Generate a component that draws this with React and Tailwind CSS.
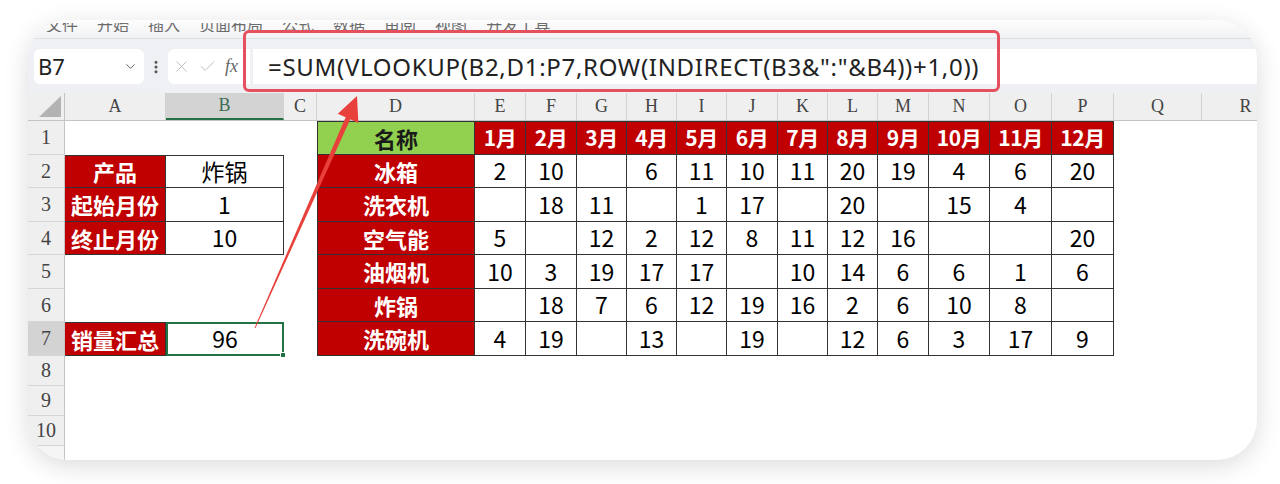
import React from 'react'
import { ChevronDown, EllipsisVertical, X, Check } from 'lucide-react'

const COLS = [
  ['A', 'w-[101px]'],
  ['B', 'w-[118px]'],
  ['C', 'w-[33px]'],
  ['D', 'w-[158px]'],
  ['E', 'w-[51px]'],
  ['F', 'w-[51px]'],
  ['G', 'w-[50px]'],
  ['H', 'w-[50px]'],
  ['I', 'w-[50px]'],
  ['J', 'w-[51px]'],
  ['K', 'w-[50px]'],
  ['L', 'w-[50px]'],
  ['M', 'w-[51px]'],
  ['N', 'w-[61px]'],
  ['O', 'w-[62px]'],
  ['P', 'w-[62px]'],
  ['Q', 'w-[88px]'],
  ['R', 'w-[88px]'],
]

const MONTH_COLS = COLS.slice(4, 16)

const products = [
  ['冰箱', [2, 10, null, 6, 11, 10, 11, 20, 19, 4, 6, 20]],
  ['洗衣机', [null, 18, 11, null, 1, 17, null, 20, null, 15, 4, null]],
  ['空气能', [5, null, 12, 2, 12, 8, 11, 12, 16, null, null, 20]],
  ['油烟机', [10, 3, 19, 17, 17, null, 10, 14, 6, 6, 1, 6]],
  ['炸锅', [null, 18, 7, 6, 12, 19, 16, 2, 6, 10, 8, null]],
  ['洗碗机', [4, 19, null, 13, null, 19, null, 12, 6, 3, 17, 9]],
]

const leftTable = { 2: ['产品', '炸锅'], 3: ['起始月份', '1'], 4: ['终止月份', '10'] }

const menu = ['文件', '开始', '插入', '页面布局', '公式', '数据', '审阅', '视图', '开发工具']

const cellFont = "font-['Noto_Sans_CJK_SC',sans-serif]"
const serif = "font-['Liberation_Serif',serif]"
const line = 'border-[#333]'

function RowHead({ n, active, h }) {
  return (
    <div
      className={`w-[37px] ${h} shrink-0 flex items-center justify-center border-r border-b border-r-[#c4c4c4] border-b-[#d6d6d6] text-[20px] text-[#444] ${serif} ${
        active ? 'bg-[#d3d3d3]' : 'bg-[#efefef]'
      }`}
    >
      {n}
    </div>
  )
}

function SheetRow({ r }) {
  const prod = r >= 2 ? products[r - 2] : null
  return (
    <div className="flex h-[33.5px]">
      <RowHead n={r} active={r === 7} h="h-[33.5px]" />
      {/* A */}
      {leftTable[r] || r === 7 ? (
        <div
          className={`${COLS[0][1]} shrink-0 flex items-center justify-center bg-[#c00000] text-white font-bold text-[22px] leading-none ${cellFont} border-b border-r ${line} ${
            r === 2 || r === 7 ? 'border-t' : ''
          }`}
        >
          {r === 7 ? '销量汇总' : leftTable[r][0]}
        </div>
      ) : (
        <div className={`${COLS[0][1]} shrink-0`} />
      )}
      {/* B */}
      {leftTable[r] ? (
        <div
          className={`${COLS[1][1]} shrink-0 flex items-center justify-center bg-white text-black text-[23px] leading-none ${cellFont} border-b border-r ${line} ${
            r === 2 ? 'border-t' : ''
          }`}
        >
          {leftTable[r][1]}
        </div>
      ) : r === 7 ? (
        <div
          className={`${COLS[1][1]} shrink-0 relative flex items-center justify-center bg-white text-black text-[23px] leading-none ${cellFont} border-2 border-[#217346]`}
        >
          96
          <span className="absolute -right-[4px] -bottom-[4px] w-[6px] h-[6px] bg-[#217346] border border-white" />
        </div>
      ) : (
        <div className={`${COLS[1][1]} shrink-0`} />
      )}
      {/* C */}
      <div className={`${COLS[2][1]} shrink-0`} />
      {/* D */}
      <div
        className={`${COLS[3][1]} shrink-0 flex items-center justify-center font-bold text-[22px] leading-none ${cellFont} border-l border-r border-b ${line} ${
          r === 1 ? 'border-t bg-[#92d050] text-[#1a1a1a]' : 'bg-[#c00000] text-white'
        }`}
      >
        {r === 1 ? '名称' : prod[0]}
      </div>
      {/* E..P */}
      {MONTH_COLS.map(([key, w], i) =>
        r === 1 ? (
          <div
            key={key}
            className={`${w} shrink-0 flex items-center justify-center bg-[#c00000] text-white font-bold text-[21px] leading-none tracking-[-0.5px] ${cellFont} border-t border-r border-b ${line}`}
          >
            {i + 1}月
          </div>
        ) : (
          <div
            key={key}
            className={`${w} shrink-0 flex items-center justify-center bg-white text-black text-[23px] leading-none ${cellFont} border-r border-b ${line}`}
          >
            {prod[1][i]}
          </div>
        )
      )}
      <div className={`${COLS[16][1]} shrink-0`} />
      <div className={`${COLS[17][1]} shrink-0`} />
    </div>
  )
}

export default function App() {
  return (
    <div className="relative w-[1280px] h-[484px] bg-white overflow-hidden pt-[20px] pl-[28px]">
      <div className="w-[1229px] h-[440px] rounded-[40px] overflow-hidden bg-white shadow-[0_6px_26px_rgba(0,0,0,0.14)] flex flex-col">
        {/* ribbon tabs (cut off at the top) */}
        <div className="h-[18px] shrink-0 bg-gradient-to-b from-[#fdfdfd] to-[#f1f2f4] pt-[3px]">
          <div className="h-[9px] overflow-hidden">
            <div className="flex gap-[19px] pl-[18px] -mt-[7px] text-[16px] leading-[16px] text-[#6b6b6b] font-['Noto_Sans_CJK_SC',sans-serif]">
              {menu.map((m) => (
                <span key={m}>{m}</span>
              ))}
            </div>
          </div>
        </div>

        {/* formula bar */}
        <div className="h-[55px] shrink-0 bg-[#eef0f3] border-t border-[#dcdfe4] pt-[10px] flex items-start">
          <div className="ml-[6px] w-[110px] h-[35px] bg-white rounded-md flex items-center pl-[4px] pr-[6px]">
            <span className="flex-1 text-[22px] text-[#222] font-['Noto_Sans',sans-serif]">B7</span>
            <ChevronDown size={15} strokeWidth={1.5} className="text-[#555]" />
          </div>
          <div className="w-[24px] h-[35px] flex items-center justify-center">
            <EllipsisVertical size={16} strokeWidth={2.5} className="text-[#555]" />
          </div>
          <div className="w-[82px] h-[35px] bg-white rounded-l-md flex items-center pl-[4px]">
            <X size={19} strokeWidth={1.2} className="text-[#bbb]" />
            <Check size={19} strokeWidth={1.2} className="text-[#bbb] ml-[7px]" />
            <span className="ml-[8px] text-[18px] italic text-[#666] font-['Liberation_Serif',serif]">fx</span>
          </div>
          <div className="ml-[3px] flex-1 h-[35px] bg-white flex items-center pl-[15px]">
            <span className="text-[24px] tracking-[0.7px] text-[#222] font-['Noto_Sans',sans-serif] whitespace-nowrap">
              =SUM(VLOOKUP(B2,D1:P7,ROW(INDIRECT(B3&amp;":"&amp;B4))+1,0))
            </span>
          </div>
        </div>

        {/* column headers */}
        <div className="flex h-[28px] shrink-0 bg-[#efefef] border-b border-[#c4c4c4]">
          <div className="w-[37px] shrink-0 flex items-end justify-end pr-[3px] pb-[3px] border-r border-[#c4c4c4]">
            <svg width="22" height="21" viewBox="0 0 22 21">
              <polygon points="22,0 22,21 0,21" fill="#b3b3b3" />
            </svg>
          </div>
          {COLS.map(([key, w]) => (
            <div
              key={key}
              className={`${w} shrink-0 flex items-center justify-center border-r border-[#d2d2d2] text-[18px] ${serif} ${
                key === 'B'
                  ? 'bg-[#d3d3d3] text-[#3c6e54] border-b-2 border-b-[#217346]'
                  : 'text-[#444]'
              }`}
            >
              {key}
            </div>
          ))}
        </div>

        {[1, 2, 3, 4, 5, 6, 7].map((r) => (
          <SheetRow key={r} r={r} />
        ))}

        {[8, 9, 10].map((r) => (
          <div key={r} className="flex h-[30px] shrink-0">
            <RowHead n={r} h="h-[30px]" />
          </div>
        ))}
        <div className="flex flex-1">
          <div className="w-[37px] bg-[#f5f5f5] border-r border-[#c4c4c4]" />
        </div>
      </div>

      {/* highlight box round the formula */}
      <div className="absolute left-[243px] top-[30px] w-[757px] h-[62px] border-[3px] border-[#e6505e] rounded-[6px] pointer-events-none" />

      {/* arrow */}
      <svg className="absolute inset-0 pointer-events-none" width="1280" height="484" viewBox="0 0 1280 484">
        <polygon points="350.4,119.1 345.8,117.1 254.6,327.8 255.4,328.2" fill="#e8403a" />
        <polygon points="357,96 358.4,123 337.8,113.8" fill="#e8403a" />
      </svg>
    </div>
  )
}
